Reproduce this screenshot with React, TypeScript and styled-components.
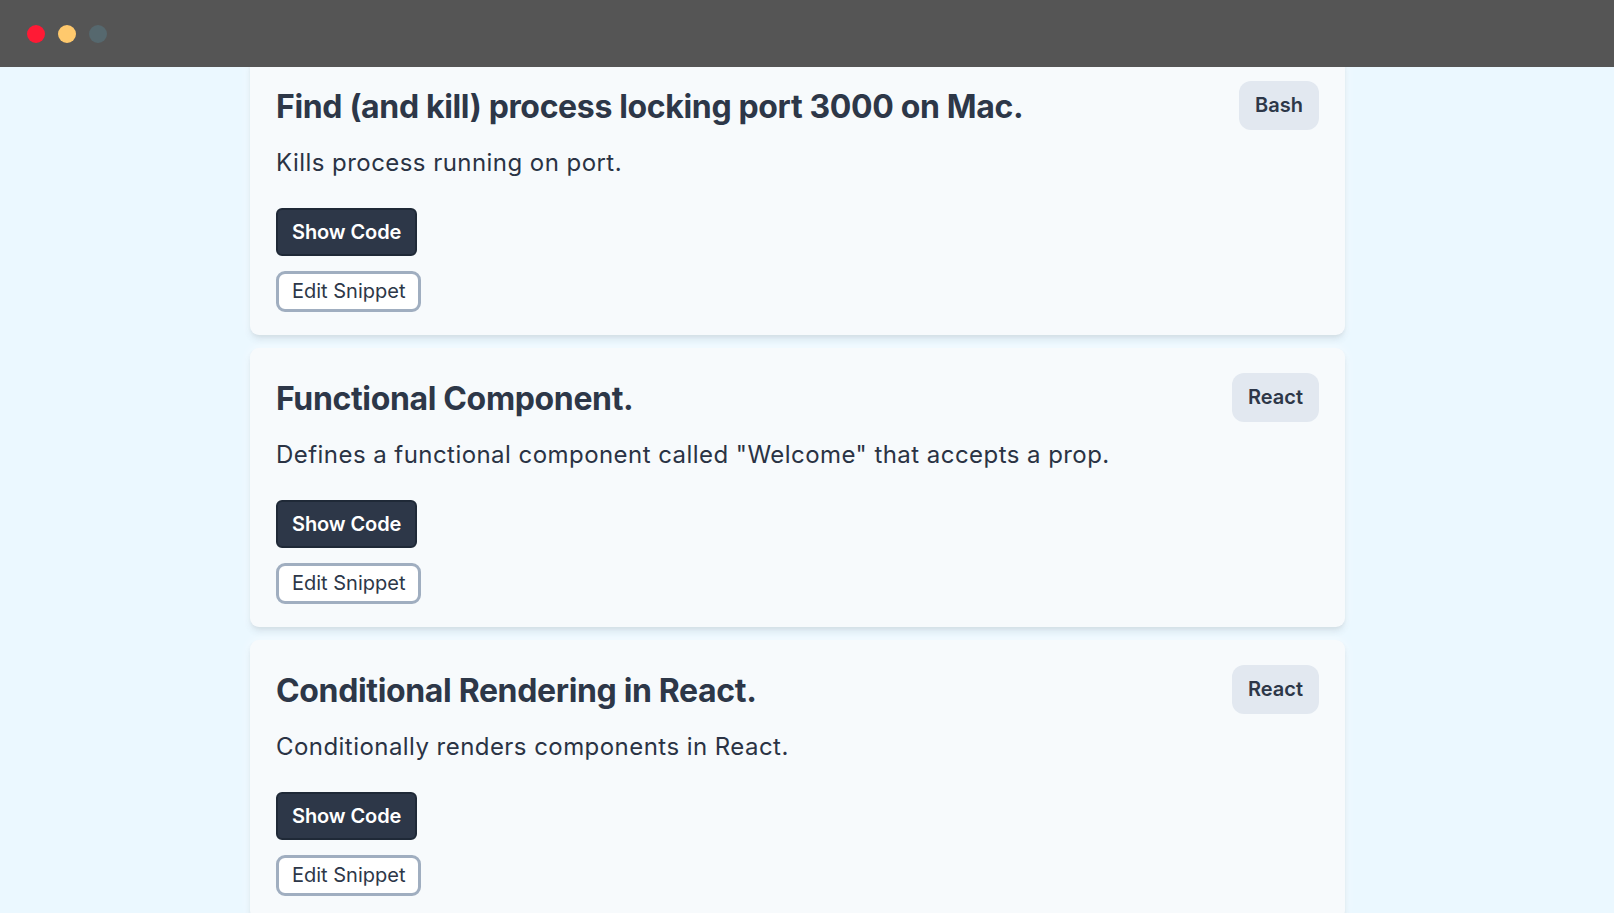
import React from "react";
import styled, { createGlobalStyle } from "styled-components";

const GlobalStyle = createGlobalStyle`
  * { box-sizing: border-box; }
  html, body { margin: 0; padding: 0; height: 100%; }
  body {
    background: #ebf8ff;
    font-family: Inter, "Noto Sans", "Liberation Sans", sans-serif;
    color: #2d3748;
    overflow: hidden;
  }
  #root { height: 100%; }
`;

const Window = styled.div`
  display: flex;
  flex-direction: column;
  height: 100vh;
`;

const TitleBar = styled.header`
  flex: 0 0 67px;
  background: #555555;
  display: flex;
  align-items: center;
  gap: 13px;
  padding: 0 0 0 27px;
  position: relative;
  z-index: 2;
`;

const Light = styled.span<{ $color: string }>`
  width: 18px;
  height: 18px;
  border-radius: 50%;
  background: ${(p) => p.$color};
`;

const Viewport = styled.main`
  flex: 1;
  overflow: hidden;
  background: #ebf8ff;
`;

const List = styled.div`
  width: 1095px;
  margin: -11px 0 0 250px;
  display: flex;
  flex-direction: column;
  gap: 13px;
`;

const Card = styled.article`
  background: #f7fafc;
  border-radius: 9px;
  padding: 25px 26px 23px;
  box-shadow: 0 5px 7px -1px rgba(45, 70, 90, 0.12),
    0 2px 4px -1px rgba(0, 0, 0, 0.05), 0 0 12px rgba(255, 255, 255, 0.6);
`;

const Header = styled.div`
  display: flex;
  align-items: center;
  justify-content: space-between;
  height: 49px;
`;

const Title = styled.h2`
  margin: 0;
  padding-top: 2px;
  font-size: 32px;
  line-height: 40px;
  font-weight: 700;
  color: #2d3748;
  letter-spacing: -0.35px;
`;

const Badge = styled.span`
  background: #e2e8f0;
  border-radius: 12px;
  padding: 12px 16px;
  font-size: 20px;
  line-height: 25px;
  font-weight: 600;
  color: #2d3748;
`;

const Description = styled.p`
  margin: 15px 0 0;
  font-size: 24px;
  line-height: 36px;
  letter-spacing: 0.45px;
  color: #2a3344;
`;

const Actions = styled.div`
  margin-top: 27px;
  display: flex;
  flex-direction: column;
  align-items: flex-start;
  gap: 15px;
`;

const PrimaryButton = styled.button`
  font-family: inherit;
  background: #2d3748;
  color: #ffffff;
  border: 2px solid #1f2937;
  border-radius: 6px;
  padding: 8px 14px;
  font-size: 20px;
  line-height: 28px;
  font-weight: 600;
  letter-spacing: -0.1px;
  cursor: pointer;
`;

const OutlineButton = styled.button`
  font-family: inherit;
  background: #ffffff;
  color: #2d3748;
  border: 3px solid #a0aec0;
  border-radius: 9px;
  padding: 4px 13px;
  font-size: 20px;
  line-height: 27px;
  font-weight: 400;
  cursor: pointer;
`;

const snippets = [
  {
    title: "Find (and kill) process locking port 3000 on Mac.",
    tag: "Bash",
    description: "Kills process running on port.",
  },
  {
    title: "Functional Component.",
    tag: "React",
    description:
      'Defines a functional component called "Welcome" that accepts a prop.',
  },
  {
    title: "Conditional Rendering in React.",
    tag: "React",
    description: "Conditionally renders components in React.",
  },
];

export default function App() {
  return (
    <>
      <GlobalStyle />
      <Window>
        <TitleBar>
          <Light $color="#ff1a35" />
          <Light $color="#ffc96d" />
          <Light $color="#56686e" />
        </TitleBar>
        <Viewport>
          <List>
            {snippets.map((s) => (
              <Card key={s.title}>
                <Header>
                  <Title>{s.title}</Title>
                  <Badge>{s.tag}</Badge>
                </Header>
                <Description>{s.description}</Description>
                <Actions>
                  <PrimaryButton>Show Code</PrimaryButton>
                  <OutlineButton>Edit Snippet</OutlineButton>
                </Actions>
              </Card>
            ))}
          </List>
        </Viewport>
      </Window>
    </>
  );
}
